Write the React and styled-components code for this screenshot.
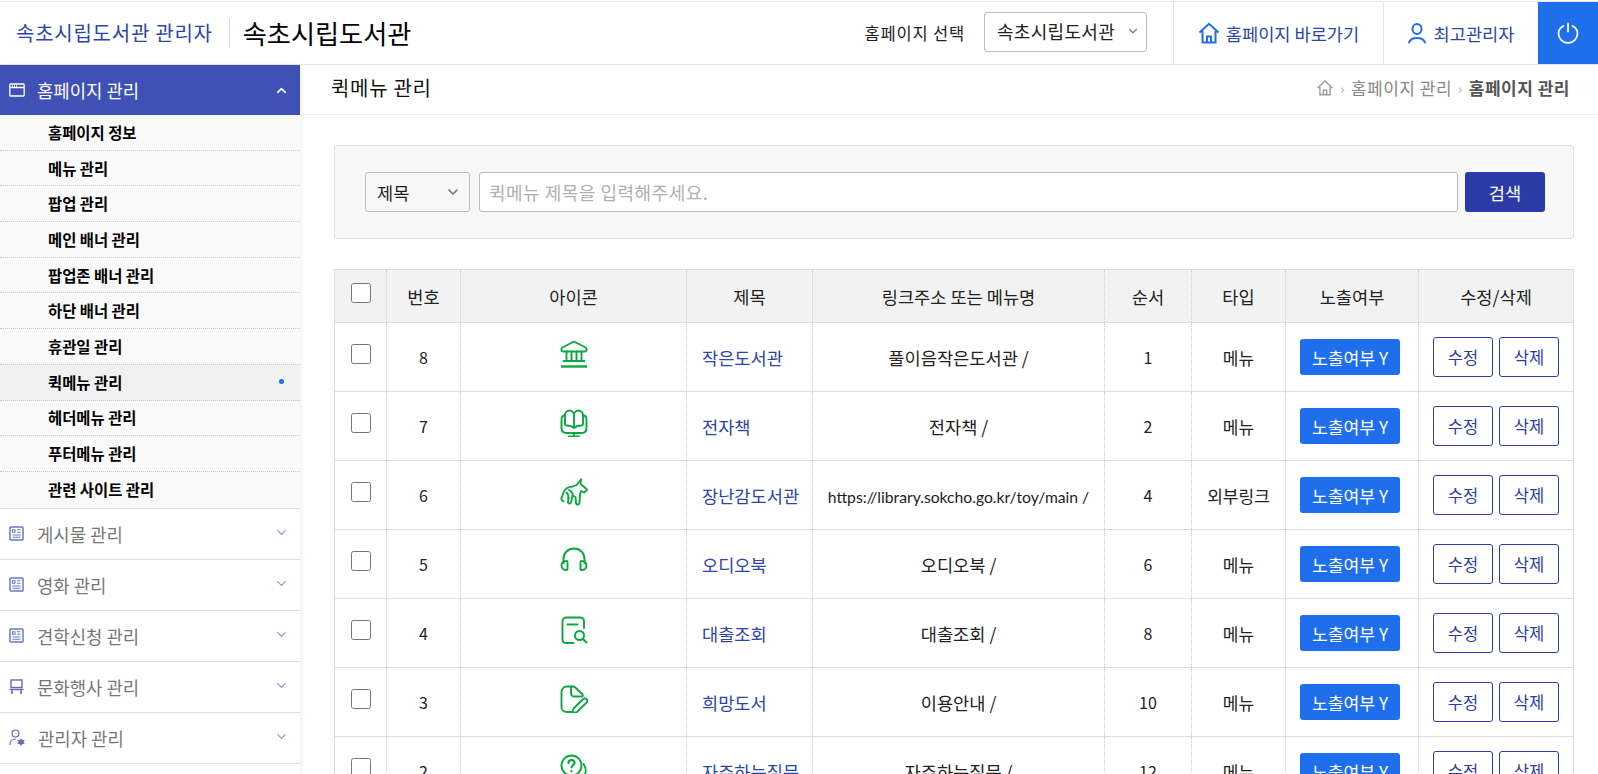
import React from 'react';
import styled, { createGlobalStyle } from 'styled-components';
import { ChevronDown, ChevronUp } from 'lucide-react';

const Global = createGlobalStyle`
  html, body { margin: 0; padding: 0; height: 100%; overflow: hidden; background: #fff; }
  body { font-family: "Noto Sans CJK KR", "Noto Sans", sans-serif; color: #222; }
  * { box-sizing: border-box; }
`;

const Page = styled.div`
  height: 774px;
  overflow: hidden;
  padding-top: 1px;
  display: flex;
  flex-direction: column;
`;
const Header = styled.header`
  height: 64px;
  flex: none;
  display: flex;
  align-items: center;
  border-top: 1px solid #eee6ef;
  border-bottom: 1px solid #e6e3e8;
  padding-left: 16px;
`;
const AdminTitle = styled.div`
  font-size: 20px;
  letter-spacing: .75px;
  color: #2f44a8;
  line-height: 30px;
  padding-right: 16px;
  border-right: 1px solid #ddd;
  margin-top: -1px;
`;
const SiteTitle = styled.div`
  font-size: 26.200px;
  color: #000;
  margin-left: 13px;
  margin-top: -1px;
  flex: 1;
`;
const SelectLabel = styled.span`
  font-size: 16.500px;
  letter-spacing: .8px;
  color: #222;
  margin-right: 19px;
`;
const HeaderSelectBox = styled.div`
  width: 163px;
  height: 40px;
  border: 1px solid #bbb;
  border-radius: 3px;
  display: flex;
  align-items: center;
  justify-content: space-between;
  padding: 0 6px 2px 12px;
  font-size: 18px;
  letter-spacing: .3px;
  color: #222;
  margin-right: 26px;
  margin-top: -2px;
  white-space: nowrap;
  svg { color: #777; flex: none; }
`;
const HeaderLink = styled.a`
  height: 100%;
  display: flex;
  align-items: center;
  gap: ${p => p.$gap}px;
  border-left: 1px solid #e6e3e8;
  color: #2f44a8;
  font-size: 17.600px;
  width: ${p => p.$w}px;
  justify-content: center;
`;
const PowerButton = styled.button`
  width: 60px;
  height: 100%;
  background: #1f6fec;
  border: 0;
  padding: 0;
  display: flex;
  align-items: center;
  justify-content: center;
`;
const Body = styled.div`
  flex: 1;
  display: flex;
  min-height: 0;
`;
const Sidebar = styled.nav`
  width: 300px;
  flex: none;
  box-shadow: 2px 0 4px rgba(0,0,0,.05);
  position: relative;
`;
const MenuHead = styled.div`
  height: ${p => p.$active ? 50 : 51}px;
  display: flex;
  align-items: center;
  padding: 0 11px 0 9px;
  font-size: 17.800px;
  color: ${p => p.$active ? '#fff' : '#777'};
  background: ${p => p.$active ? '#3f51b5' : '#fff'};
  border-bottom: ${p => p.$active ? '0' : '1px solid #d9dbf0'};
  span { flex: 1; margin-left: ${p => p.$active ? 12 : 13}px; }
  svg:last-child { color: ${p => p.$active ? '#fff' : '#8c97dc'}; margin-top: ${p => p.$active ? 0 : -3}px; }
`;
const SubList = styled.ul`
  list-style: none;
  margin: 0;
  padding: 0;
  background: #f9f9f9;
  border-bottom: 1px solid #d9dbf0;
`;
const SubItem = styled.li`
  height: 35.700px;
  display: flex;
  align-items: center;
  justify-content: space-between;
  padding: 0 16px 1px 48px;
  font-size: 15.400px;
  font-weight: 700;
  color: #000;
  background: ${p => p.$active ? '#f1f1f1' : 'transparent'};
  border-bottom: 1px dotted #c8c8c8;
  &:last-child { border-bottom: 0; }
`;
const Dot = styled.i`
  width: 5px;
  height: 5px;
  border-radius: 50%;
  background: #1f6fec;
`;
const Main = styled.main`
  flex: 1;
  min-width: 0;
`;
const ContentHead = styled.div`
  height: 50px;
  display: flex;
  align-items: center;
  justify-content: space-between;
  border-bottom: 1px solid #ececec;
  padding: 0 28px 4px 31px;
`;
const PageTitle = styled.h2`
  margin: 0;
  font-size: 20px;
  letter-spacing: .7px;
  font-weight: 400;
  color: #111;
`;
const Crumbs = styled.div`
  display: flex;
  align-items: center;
  gap: 6px;
  font-size: 17px;
  letter-spacing: .5px;
  color: #888;
  b { color: #555; font-weight: 700; }
`;
const Sep = styled.em`
  font-style: normal;
  font-size: 14px;
  color: #aaa;
`;
const SearchPanel = styled.form`
  margin: 30px 24px 30px 34px;
  height: 94px;
  background: #f8f8f8;
  border: 1px solid #e0e0e0;
  border-radius: 3px;
  display: flex;
  align-items: center;
  gap: 9px;
  padding: 0 28px 0 30px;
`;
const SearchSelect = styled.div`
  width: 105px;
  height: 40px;
  border: 1px solid #bbb;
  border-radius: 3px;
  background: #f8f8f8;
  display: flex;
  align-items: center;
  justify-content: space-between;
  padding: 0 8px 0 11px;
  font-size: 17.600px;
  color: #222;
  svg { color: #777; }
`;
const SearchInput = styled.input`
  flex: 1;
  min-width: 0;
  height: 40px;
  border: 1px solid #bbb;
  border-radius: 3px;
  padding: 0 9px;
  font: inherit;
  font-size: 18px;
  letter-spacing: .5px;
  background: #fff;
  &::placeholder { color: #b0b0b0; }
`;
const SearchButton = styled.button`
  width: 80px;
  height: 40px;
  margin-left: -2px;
  background: #2b3ca8;
  color: #fff;
  border: 0;
  border-radius: 3px;
  font: inherit;
  font-size: 17.600px;
  padding: 0;
`;
const Table = styled.table`
  margin-left: 34px;
  width: 1240px;
  table-layout: fixed;
  border-collapse: collapse;
  border: 1px solid #ddd;
  font-size: 17.600px;
  color: #222;
`;
const Th = styled.th`
  height: 53px;
  width: ${p => p.$w}px;
  background: #f2f2f2;
  font-weight: 400;
  text-align: center;
  padding: 0;
  border-bottom: 1px solid #ddd;
  border-left: 1px dotted #ccc;
  &:first-child { border-left: 0; }
`;
const Td = styled.td`
  height: 69px;
  text-align: center;
  padding: 0;
  border-bottom: 1px solid #ddd;
  border-left: 1px dotted #ccc;
  white-space: nowrap;
  &:first-child { border-left: 0; }
`;
const NumTd = styled(Td)`
  font-size: 16px;
`;
const TitleTd = styled(Td)`
  color: #2f44a8;
  text-align: left;
  padding-left: 15px;
`;
const TypeTd = styled(Td)`
  font-size: 17px;
`;
const UrlText = styled.span`
  font-family: Lato, "Noto Sans CJK KR", sans-serif;
  font-size: 15.700px;
`;
const Check = styled.input.attrs({ type: 'checkbox' })`
  width: 20px;
  height: 20px;
  display: block;
  margin: -6px auto 0;
`;
const Visible = styled.button`
  width: 100px;
  height: 36px;
  margin-right: 4px;
  background: #1f6fec;
  color: #fff;
  border: 0;
  border-radius: 3px;
  font: inherit;
  font-size: 17.200px;
  padding: 0;
`;
const Actions = styled.div`
  display: flex;
  justify-content: center;
  gap: 6px;
`;
const OutlineButton = styled.button`
  width: 60px;
  height: 40px;
  background: #fff;
  color: #2b3ca8;
  border: 1px solid #2b3ca8;
  border-radius: 3px;
  font: inherit;
  font-size: 16.500px;
  padding: 0;
`;
const IconWrap = styled.svg`
  display: block;
  margin: -6px auto 0;
  fill: none;
  stroke: #0aa83f;
  stroke-width: 1.9;
  stroke-linecap: round;
  stroke-linejoin: round;
`;

const Green = ({ children }) => <IconWrap width="28" height="28" viewBox="0 0 28 28">{children}</IconWrap>;

const icons = {
  bank: <Green><path d="M14 1.500 2.500 7.500C.8 8.500 1 11.500 3 11.500h22c2 0 2.200-3 .5-4z" /><path d="M6.500 11.500v9M11.500 11.500v9M16.500 11.500v9M21.500 11.500v9M3.500 21h21" /><path d="M1 26.500h26" strokeWidth="2.400" strokeLinecap="butt" /></Green>,
  book: <Green><path d="M5 6C2.500 6.500 1.500 8.500 1.500 10.500v8.500c0 3 2 5 5 5h15c3 0 5-2 5-5v-8.500c0-2-1-4-3.500-4.500" /><path d="M14 19C12 17 9 16.500 6.500 16.500c-1 0-1.500-.5-1.500-1.500V6c0-2.500 2-4.500 4.500-4.500S14 3.500 14 6zM14 19c2-2 5-2.500 7.500-2.500 1 0 1.500-.5 1.500-1.500V6c0-2.500-2-4.500-4.500-4.500S14 3.500 14 6z" /><path d="M14 24v3.500M9 27.500h10" /></Green>,
  horse: <Green><path d="M21 1.500 20.500 6l6 5c.5.5.5 1 0 1.500l-2.500 2-3-1.500-1 3-.5 8.500c0 2.500-3.500 2.500-3.500.5l-.5-6-3-1.500-1.500 7c-.5 1.500-3 1.500-3 0l.5-5" /><path d="M21 1.500 16.500 7 13 8.500C8 8.500 5 11 3.500 14.500l-2 5.500c-.5 1.500.5 3 2 3.500" /><path d="M9 12c2 1 4 3 4 6M6.500 14.500c1.500 1 2 3 2 5.500" /></Green>,
  phones: <Green><path d="M3.500 16v-4C3.500 6 8 1.500 14 1.500S24.500 6 24.500 12v4" /><path d="M6.500 14C3.500 14 1.500 16 1.500 18.500S3.500 23 6.500 23c.7 0 1-.5 1-1v-7c0-.5-.3-1-1-1zM21.500 14c3 0 5 2 5 4.500S24.500 23 21.500 23c-.7 0-1-.5-1-1v-7c0-.5.300-1 1-1z" /></Green>,
  docSearch: <Green><path d="M24 12V5.500c0-2.200-1.500-4-4-4H6.500c-2.500 0-4 1.800-4 4v18c0 2.200 1.500 3.500 4 3.500h7" /><path d="M7.500 8.500h10" /><circle cx="19.500" cy="19.500" r="4.500" strokeWidth="2" /><path d="m23 23 3.500 3.500" strokeWidth="2" /></Green>,
  docPen: <Green><path d="M12 1.500H7C3.800 1.500 1.500 3.800 1.500 7v15c0 3 2.300 5 5.500 5h5" /><path d="M12 1.500c-.7 0-1 .4-1 1.200V8c0 2 1.400 3.500 3.500 3.500h7c1.300 0 1.800-1.200 1-2.200L15 2.300c-.8-.7-1.700-.8-3-.8z" /><path d="M13.500 23.500 23 14.200c1-1 2.700-1 3.500 0 1 1 1 2.500 0 3.500L17 27c-1 .6-3.300.8-3.800.3s-.2-2.800.3-3.800z" /></Green>,
  ask: <Green><circle cx="11.500" cy="11.500" r="10" /><path d="M8.500 9c0-4 6-4 6 0 0 2-3 2.500-3 4.500M11.500 17v.3" strokeWidth="2.200" /><path d="M23.500 10c3 4 3 9 0 12.500" /></Green>,
};

const LineIcon = styled.svg`
  flex: none;
  display: block;
`;
const HomeIcon = () => (
  <LineIcon width="22" height="22" viewBox="0 0 22 22" fill="none" stroke="#1f6fec" strokeWidth="2" strokeLinejoin="miter">
    <path d="M1.500 10.500 11 1.800l9.500 8.700M4.500 9v11.500h13V9M9 20.500v-6h4v6" />
  </LineIcon>
);
const UserIcon = () => (
  <LineIcon width="18" height="21" viewBox="0 0 18 21" fill="none" stroke="#1f6fec" strokeWidth="2" strokeLinecap="round">
    <ellipse cx="9" cy="6" rx="4.500" ry="5" />
    <path d="M1 19.500c1-3 4-4.500 8-4.500s7 1.500 8 4.500" />
  </LineIcon>
);
const PowerIcon = () => (
  <LineIcon width="22" height="22" viewBox="0 0 22 22" fill="none" stroke="#fff" strokeWidth="1.800" strokeLinecap="round">
    <path d="M11 1.500v8M6.500 4C3.500 5.500 1.500 8.500 1.500 11.500a9.500 9.500 0 0 0 19 0c0-3-2-6-5-7.500" />
  </LineIcon>
);
const WindowIcon = () => (
  <LineIcon width="16" height="14" viewBox="0 0 16 14" fill="none" stroke="#fff" strokeWidth="1.300">
    <rect x=".8" y="1" width="14.400" height="12" rx="1" />
    <path d="M1 4.500h14M3 2.800h1M5 2.800h1M7 2.800h1" />
  </LineIcon>
);
const BoardIcon = () => (
  <LineIcon width="15" height="15" viewBox="0 0 15 15" fill="none" stroke="#6a78c8" strokeWidth="1.500">
    <rect x="1" y="1" width="13" height="13" rx=".8" />
    <path d="M3.500 3.800h2.500v2.500h-2.500zM8 3.800h3.500M8 6.200h3.500M3.500 9h8M3.500 11.300h8" strokeWidth="1.100" />
  </LineIcon>
);
const PresentIcon = () => (
  <LineIcon width="15" height="15" viewBox="0 0 15 15" fill="none" stroke="#5c6bc0" strokeWidth="1.400">
    <rect x="2" y="1" width="11" height="7.500" />
    <path d="M.5 10.500h14M3.500 10.500l-1 3.500M11.500 10.500l1 3.500M2 14h2M11 14h2" />
  </LineIcon>
);
const AdminIcon = () => (
  <LineIcon width="16" height="17" viewBox="0 0 16 17" fill="none" stroke="#5c6bc0" strokeWidth="1.200" strokeLinecap="round">
    <circle cx="6.500" cy="4.500" r="3.500" />
    <path d="M1 15.500c0-3 2-5.500 5.500-5.500" />
    <circle cx="12" cy="13" r="2" fill="#5c6bc0" />
    <path d="M12 9.800v1M12 15.200v1M9 11.500l.8.500M14.200 14l.8.500M9 14.500l.8-.5M14.200 12l.8-.500" />
  </LineIcon>
);
const CrumbHome = () => (
  <LineIcon width="18" height="18" viewBox="0 0 16 16" fill="none" stroke="#999" strokeWidth="1.200">
    <path d="M1.500 8 8 1.800 14.500 8M3.500 7v7h9V7M6.500 14v-4h3v4" />
  </LineIcon>
);

const subs = ['홈페이지 정보', '메뉴 관리', '팝업 관리', '메인 배너 관리', '팝업존 배너 관리', '하단 배너 관리', '휴관일 관리', '퀵메뉴 관리', '헤더메뉴 관리', '푸터메뉴 관리', '관련 사이트 관리'];
const menus = [
  ['게시물 관리', <BoardIcon />], ['영화 관리', <BoardIcon />], ['견학신청 관리', <BoardIcon />],
  ['문화행사 관리', <PresentIcon />], ['관리자 관리', <AdminIcon />],
];
const cols = [['', 52], ['번호', 74], ['아이콘', 226], ['제목', 126], ['링크주소 또는 메뉴명', 292], ['순서', 87], ['타입', 94], ['노출여부', 133], ['수정/삭제', 155]];
const rows = [
  [8, 'bank', '작은도서관', '풀이음작은도서관 /', 1, '메뉴'],
  [7, 'book', '전자책', '전자책 /', 2, '메뉴'],
  [6, 'horse', '장난감도서관', 'https://library.sokcho.go.kr/toy/main /', 4, '외부링크', true],
  [5, 'phones', '오디오북', '오디오북 /', 6, '메뉴'],
  [4, 'docSearch', '대출조회', '대출조회 /', 8, '메뉴'],
  [3, 'docPen', '희망도서', '이용안내 /', 10, '메뉴'],
  [2, 'ask', '자주하는질문', '자주하는질문 /', 12, '메뉴'],
];

export default function App() {
  return (
    <Page>
      <Global />
      <Header>
        <AdminTitle>속초시립도서관 관리자</AdminTitle>
        <SiteTitle>속초시립도서관</SiteTitle>
        <SelectLabel>홈페이지 선택</SelectLabel>
        <HeaderSelectBox>속초시립도서관<ChevronDown size={14} /></HeaderSelectBox>
        <HeaderLink $w={210} $gap={6}><HomeIcon />홈페이지 바로가기</HeaderLink>
        <HeaderLink $w={155} $gap={8}><UserIcon />최고관리자</HeaderLink>
        <PowerButton aria-label="로그아웃"><PowerIcon /></PowerButton>
      </Header>
      <Body>
        <Sidebar>
          <MenuHead $active><WindowIcon /><span>홈페이지 관리</span><ChevronUp size={15} strokeWidth={2.500} /></MenuHead>
          <SubList>
            {subs.map(s => <SubItem key={s} $active={s === '퀵메뉴 관리'}>{s}{s === '퀵메뉴 관리' && <Dot />}</SubItem>)}
          </SubList>
          {menus.map(([t, ic]) => <MenuHead key={t}>{ic}<span>{t}</span><ChevronDown size={15} /></MenuHead>)}
        </Sidebar>
        <Main>
          <ContentHead>
            <PageTitle>퀵메뉴 관리</PageTitle>
            <Crumbs><CrumbHome /><Sep>›</Sep>홈페이지 관리<Sep>›</Sep><b>홈페이지 관리</b></Crumbs>
          </ContentHead>
          <SearchPanel>
            <SearchSelect>제목<ChevronDown size={16} strokeWidth={2.500} /></SearchSelect>
            <SearchInput placeholder="퀵메뉴 제목을 입력해주세요." />
            <SearchButton type="button">검색</SearchButton>
          </SearchPanel>
          <Table>
            <thead>
              <tr>{cols.map(([t, w], i) => <Th key={i} $w={w}>{i === 0 ? <Check /> : t}</Th>)}</tr>
            </thead>
            <tbody>
              {rows.map(r => (
                <tr key={r[0]}>
                  <Td><Check /></Td>
                  <NumTd>{r[0]}</NumTd>
                  <Td>{icons[r[1]]}</Td>
                  <TitleTd>{r[2]}</TitleTd>
                  <Td>{r[6] ? <UrlText>{r[3]}</UrlText> : r[3]}</Td>
                  <NumTd>{r[4]}</NumTd>
                  <TypeTd>{r[5]}</TypeTd>
                  <Td><Visible>노출여부 Y</Visible></Td>
                  <Td><Actions><OutlineButton>수정</OutlineButton><OutlineButton>삭제</OutlineButton></Actions></Td>
                </tr>
              ))}
            </tbody>
          </Table>
        </Main>
      </Body>
    </Page>
  );
}
